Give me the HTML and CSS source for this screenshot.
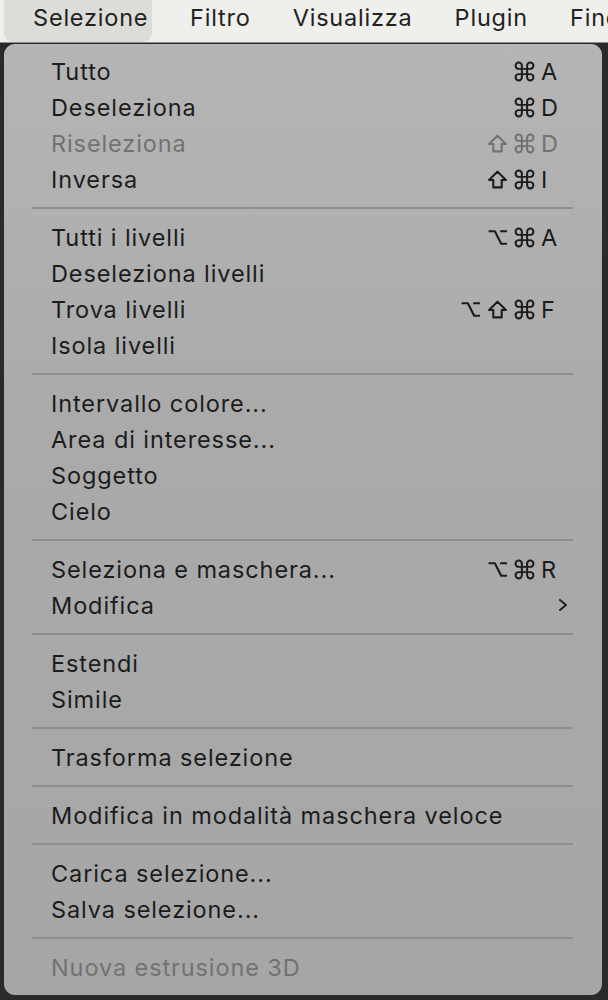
FILE: index.html
```html
<!DOCTYPE html>
<html lang="it">
<head>
<meta charset="utf-8">
<link rel="stylesheet" href="styles.css">
</head>
<body>
<svg width="0" height="0" class="defs">
  <defs>
    <symbol id="cmd" viewBox="0 0 20 20"><path d="M7.5 7.5 V4.5 A3 3 0 1 0 4.5 7.5 H15.5 A3 3 0 1 0 12.5 4.5 V15.5 A3 3 0 1 0 15.5 12.5 H4.5 A3 3 0 1 0 7.5 15.5 Z" fill="none" stroke="currentColor" stroke-width="1.9" stroke-linejoin="round"/></symbol>
    <symbol id="shift" viewBox="0 0 20 20"><path d="M10 2.5 L18 10.5 H14 V17.5 H6 V10.5 H2 Z" fill="none" stroke="currentColor" stroke-width="2" stroke-linejoin="round"/></symbol>
    <symbol id="opt" viewBox="0 0 20 20"><path d="M1.5 4 H7.5 L13.5 16 H19 M12.5 4 H19" fill="none" stroke="currentColor" stroke-width="2" stroke-linejoin="round"/></symbol>
  </defs>
</svg>
<div class="menubar">
  <div class="mb-item active">Selezione</div>
  <div class="mb-item">Filtro</div>
  <div class="mb-item">Visualizza</div>
  <div class="mb-item">Plugin</div>
  <div class="mb-item">Finestra</div>
</div>
<div class="stage">
  <div class="menu">
    <div class="item"><span class="label">Tutto</span><span class="sc"><svg class="m"><use href="#cmd"/></svg><span class="k">A</span></span></div>
    <div class="item"><span class="label">Deseleziona</span><span class="sc"><svg class="m"><use href="#cmd"/></svg><span class="k">D</span></span></div>
    <div class="item disabled"><span class="label">Riseleziona</span><span class="sc"><svg class="m"><use href="#shift"/></svg><svg class="m"><use href="#cmd"/></svg><span class="k">D</span></span></div>
    <div class="item"><span class="label">Inversa</span><span class="sc"><svg class="m"><use href="#shift"/></svg><svg class="m"><use href="#cmd"/></svg><span class="k">I</span></span></div>
    <div class="sep"></div>
    <div class="item"><span class="label">Tutti i livelli</span><span class="sc"><svg class="m"><use href="#opt"/></svg><svg class="m"><use href="#cmd"/></svg><span class="k">A</span></span></div>
    <div class="item"><span class="label">Deseleziona livelli</span></div>
    <div class="item"><span class="label">Trova livelli</span><span class="sc"><svg class="m"><use href="#opt"/></svg><svg class="m"><use href="#shift"/></svg><svg class="m"><use href="#cmd"/></svg><span class="k">F</span></span></div>
    <div class="item"><span class="label">Isola livelli</span></div>
    <div class="sep"></div>
    <div class="item"><span class="label">Intervallo colore...</span></div>
    <div class="item"><span class="label">Area di interesse...</span></div>
    <div class="item"><span class="label">Soggetto</span></div>
    <div class="item"><span class="label">Cielo</span></div>
    <div class="sep"></div>
    <div class="item"><span class="label">Seleziona e maschera...</span><span class="sc"><svg class="m"><use href="#opt"/></svg><svg class="m"><use href="#cmd"/></svg><span class="k">R</span></span></div>
    <div class="item sub"><span class="label">Modifica</span><svg class="chev" width="10" height="14" viewBox="0 0 10 14"><path d="M2 2 L8 7 L2 12" fill="none" stroke="#1e1e1e" stroke-width="2" stroke-linecap="round" stroke-linejoin="round"/></svg></div>
    <div class="sep"></div>
    <div class="item"><span class="label">Estendi</span></div>
    <div class="item"><span class="label">Simile</span></div>
    <div class="sep"></div>
    <div class="item"><span class="label">Trasforma selezione</span></div>
    <div class="sep"></div>
    <div class="item"><span class="label">Modifica in modalità maschera veloce</span></div>
    <div class="sep"></div>
    <div class="item"><span class="label">Carica selezione...</span></div>
    <div class="item"><span class="label">Salva selezione...</span></div>
    <div class="sep"></div>
    <div class="item disabled"><span class="label">Nuova estrusione 3D</span></div>
  </div>
</div>
</body>
</html>
```

FILE: styles.css
```css
* { box-sizing: border-box; }
html, body {
  margin: 0;
  padding: 0;
  width: 608px;
  height: 1000px;
  overflow: hidden;
  background: #2a2a2a;
  font-family: Inter, "Liberation Sans", sans-serif;
  -webkit-font-smoothing: antialiased;
}
.defs { position: absolute; width: 0; height: 0; }
.menubar {
  height: 43px;
  background: #efefec;
  border-bottom: 1px solid #8c8c8c;
  display: flex;
  align-items: stretch;
  padding-left: 4px;
  white-space: nowrap;
  overflow: hidden;
  font-size: 23.5px;
  letter-spacing: 0.8px;
  color: #222222;
}
.mb-item {
  display: flex;
  align-items: center;
  flex-shrink: 0;
  padding: 0 0 7px 0;
  margin-right: 42px;
}
.mb-item.active {
  background: #dcdcd8;
  border-radius: 0 0 9px 9px;
  padding: 0 4px 7px 29px;
  width: 148px;
  margin-right: 38px;
}
.stage {
  padding: 1px 6px 5px 4px;
}
.menu {
  background: linear-gradient(#b5b5b5, #aaaaaa 40%, #a6a6a6);
  border-radius: 11px;
  padding: 9px 0 10px 0;
  color: #1c1c1c;
  font-size: 23.5px;
  letter-spacing: 0.9px;
}
.item {
  height: 36px;
  display: flex;
  align-items: center;
  justify-content: space-between;
  padding: 0 43px 0 47px;
  white-space: nowrap;
}
.item.disabled { color: #727272; }
.item.sub { padding-right: 34px; }
.sc {
  display: flex;
  align-items: center;
  gap: 6px;
}
.m {
  width: 21px;
  height: 21px;
  color: inherit;
}
.k {
  width: 18px;
  text-align: left;
  letter-spacing: 0;
}
.sep {
  height: 2px;
  background: #8f8f8f;
  margin: 10px 29px 10px 28px;
}
```
